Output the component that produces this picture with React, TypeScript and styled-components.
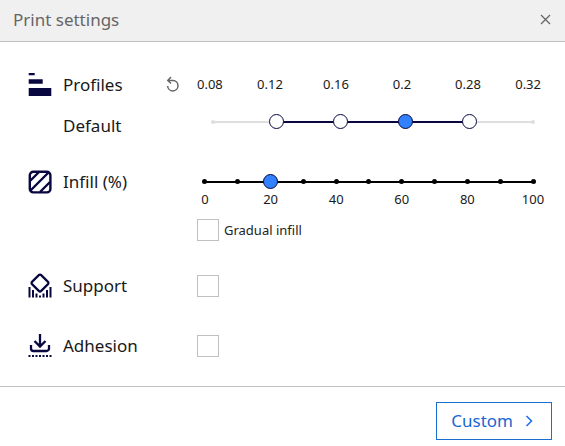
import React, { useState } from 'react';
import styled, { createGlobalStyle } from 'styled-components';

const navy = '#08073f';
const blue = '#196ef0';
const thumbBlue = '#3282ff';

const GlobalStyle = createGlobalStyle`
  * { box-sizing: border-box; }
  body {
    margin: 0;
    background: #fff;
    color: #191919;
    font: 17px/24px "Noto Sans", sans-serif;
  }
  button, input { font: inherit; margin: 0; }
`;

const Header = styled.header`
  display: flex;
  align-items: center;
  justify-content: space-between;
  height: 42px;
  padding: 0 13px 2px;
  background: #f0f0f0;
  border-bottom: 1px solid #c0c0c0;
`;

const Title = styled.h1`
  margin: 0;
  color: #666;
  font-size: 17px;
  font-weight: 400;
`;

const IconButton = styled.button`
  display: flex;
  align-items: center;
  justify-content: center;
  padding: 0;
  border: 0;
  background: none;
  color: #666;
  cursor: pointer;
`;

const Body = styled.main`
  display: grid;
  row-gap: 26px;
  padding: 26px 24px 23px 28px;
`;

const Section = styled.section`
  display: grid;
  grid-template-columns: 169px 1fr;
`;

const LabelRow = styled.div`
  display: grid;
  grid-template-columns: 24px 1fr auto;
  column-gap: 11px;
  align-items: center;
  height: 34px;
  padding-right: 17px;
`;

const ProfileName = styled.div`
  padding-left: 35px;
  line-height: 48px;
`;

const ProfileScale = styled.div`
  display: grid;
  grid-template-columns: 20fr repeat(4, 33fr) 20fr;
  align-items: center;
  height: 34px;
  padding-bottom: 2px;
  font-size: 13px;
  line-height: 18px;
  text-align: center;

  & > :first-child { text-align: left; }
  & > :last-child { text-align: right; }
`;

const ProfileTrack = styled.div`
  display: flex;
  align-items: center;
  justify-content: space-between;
  height: 39px;
  margin-left: 8px;
  background: linear-gradient(90deg, #dedede 20%, ${navy} 20% 80%, #dedede 80%)
    center / calc(100% - 15px) 2px no-repeat;
`;

const EndStop = styled.span`
  display: flex;
  justify-content: center;
  width: 15px;

  &::before {
    content: "";
    width: 4px;
    height: 4px;
    border-radius: 50%;
    background: #dedede;
  }
`;

const ProfileRadio = styled.input`
  appearance: none;
  width: 15px;
  height: 15px;
  border: 1px solid ${navy};
  border-radius: 50%;
  background: #fff;

  &:checked { background: ${thumbBlue}; }
`;

const InfillSection = styled(Section)`
  margin: -11px 0 2px;
`;

const InfillControls = styled.div`
  padding-top: 9px;
`;

const RangeBox = styled.div`
  display: grid;
  align-items: center;
  height: 15px;

  & > * { grid-area: 1 / 1; }
`;

const Ticks = styled.div`
  display: flex;
  align-items: center;
  justify-content: space-between;
  margin: 0 5px;
  height: 15px;
  background: linear-gradient(#000, #000) center / calc(100% - 4px) 2px no-repeat;
`;

const Tick = styled.span`
  width: 5px;
  height: 5px;
  border-radius: 50%;
  background: #000;
`;

const Range = styled.input`
  appearance: none;
  width: 100%;
  height: 15px;
  background: transparent;

  &::-webkit-slider-thumb {
    appearance: none;
    width: 15px;
    height: 15px;
    border: 1px solid ${navy};
    border-radius: 50%;
    background: ${thumbBlue};
  }
`;

const InfillScale = styled.div`
  display: flex;
  justify-content: space-between;
  height: 18px;
  margin: 0 8px 12px;
  font-size: 13px;
  line-height: 20px;
`;

const ScaleValue = styled.span`
  display: flex;
  justify-content: center;
  width: 0;
`;

const CheckLabel = styled.label`
  display: flex;
  align-items: center;
  gap: 5px;
  font-size: 13px;
  line-height: 22px;
  color: #222;
`;

const Checkbox = styled.input`
  appearance: none;
  align-self: center;
  width: 22px;
  height: 22px;
  border: 1px solid #c0c0c0;
  background: #fff;

  &:checked { background: ${thumbBlue}; box-shadow: inset 0 0 0 4px #fff; }
`;

const Footer = styled.footer`
  display: flex;
  justify-content: flex-end;
  padding: 15px 13px 6px;
  border-top: 1px solid #c0c0c0;
`;

const CustomButton = styled.button`
  display: flex;
  align-items: center;
  gap: 12px;
  height: 38px;
  padding: 0 18px 0 14px;
  border: 1px solid #196ecf;
  background: #fff;
  color: #1967d2;
  cursor: pointer;
`;

const ProfilesIcon = () => (
  <svg width="24" height="24" viewBox="0 0 24 24" fill={navy} aria-hidden="true">
    <path d="M.7 0h6v2.200H.7zM.7 6.200h14v4.600H.7zM.7 15h22.600v8H.7z" />
  </svg>
);

const InfillIcon = () => (
  <svg width="24" height="24" viewBox="0 0 24 24" fill="none" stroke={navy} strokeWidth="2.400" aria-hidden="true">
    <rect x="1.800" y="1.800" width="20.600" height="20.600" rx="3.500" />
    <path d="M2 11L11 2M2.500 20.500L20.500 2.500M12 22L22 12" />
  </svg>
);

const SupportIcon = () => (
  <svg width="24" height="26" viewBox="0 0 24 26" fill="none" stroke={navy} strokeWidth="2.200" aria-hidden="true">
    <path d="M12 1.600a1.700 1.700 0 0 1 1.200.5l6.800 6.800a1.500 1.500 0 0 1 0 2.200l-6.800 6.800a1.700 1.700 0 0 1-2.400 0L4 11.100a1.500 1.500 0 0 1 0-2.200l6.800-6.800a1.700 1.700 0 0 1 1.200-.5z" />
    <path strokeWidth="2" d="M1.500 14v10.500M5 17v7.500M8.500 20.500v4M12 22.500v2M15.500 20.500v4M19 17v7.500M22.500 14v10.500" />
  </svg>
);

const AdhesionIcon = () => (
  <svg width="24" height="26" viewBox="0 0 24 26" fill="none" stroke={navy} strokeWidth="2.300" aria-hidden="true">
    <path d="M12 1v12M6.500 8L12 13.500L17.500 8M3 12v3.500a2.500 2.500 0 0 0 2.500 2.500h13a2.500 2.500 0 0 0 2.500-2.500V12" />
    <path strokeWidth="2" d="M.5 23h23" strokeDasharray="2 1.500" />
  </svg>
);

const ResetIcon = () => (
  <svg width="14" height="18" viewBox="0 0 14 18" fill="none" stroke="currentColor" strokeWidth="1.500" aria-hidden="true">
    <path d="M2 4.500h5a5.200 5.200 0 1 1-5.400 5.500M5 1L1.800 4.500L5 7.500" />
  </svg>
);

const CloseIcon = () => (
  <svg width="13" height="13" viewBox="0 0 13 13" stroke="currentColor" strokeWidth="1.300" aria-hidden="true">
    <path d="M2 2l9 9M11 2l-9 9" />
  </svg>
);

const ChevronIcon = () => (
  <svg width="8" height="12" viewBox="0 0 8 12" fill="none" stroke={blue} strokeWidth="1.500" aria-hidden="true">
    <path d="M1.500 1L6.500 6L1.500 11" />
  </svg>
);

const heights = ['0.08', '0.12', '0.16', '0.2', '0.28', '0.32'];
const available = heights.slice(1, -1);
const tickValues = [0, 10, 20, 30, 40, 50, 60, 70, 80, 90, 100];

export default function App() {
  const [profile, setProfile] = useState('0.2');
  const [infill, setInfill] = useState(20);

  const reset = () => setProfile('0.2');

  return (
    <>
      <GlobalStyle />
      <Header>
        <Title>Print settings</Title>
        <IconButton type="button" aria-label="Close"><CloseIcon /></IconButton>
      </Header>
      <Body>
        <Section>
          <div>
            <LabelRow>
              <ProfilesIcon />
              <span id="profiles-label">Profiles</span>
              <IconButton type="button" aria-label="Reset profile" onClick={reset}><ResetIcon /></IconButton>
            </LabelRow>
            <ProfileName>Default</ProfileName>
          </div>
          <div>
            <ProfileScale>
              {heights.map((h) => available.includes(h)
                ? <label key={h} htmlFor={`profile-${h}`}>{h}</label>
                : <span key={h}>{h}</span>)}
            </ProfileScale>
            <ProfileTrack role="radiogroup" aria-labelledby="profiles-label">
              <EndStop />
              {available.map((h) => (
                <ProfileRadio
                  key={h}
                  id={`profile-${h}`}
                  type="radio"
                  name="profile"
                  checked={profile === h}
                  onChange={() => setProfile(h)}
                />
              ))}
              <EndStop />
            </ProfileTrack>
          </div>
        </Section>

        <InfillSection>
          <LabelRow>
            <InfillIcon />
            <label htmlFor="infill">Infill (%)</label>
          </LabelRow>
          <InfillControls>
            <RangeBox>
              <Ticks>{tickValues.map((v) => <Tick key={v} />)}</Ticks>
              <Range
                id="infill"
                type="range"
                min={0}
                max={100}
                step={10}
                value={infill}
                onChange={(e) => setInfill(Number(e.target.value))}
              />
            </RangeBox>
            <InfillScale>
              {tickValues.filter((v) => v % 20 === 0).map((v) => <ScaleValue key={v}>{v}</ScaleValue>)}
            </InfillScale>
            <CheckLabel><Checkbox type="checkbox" />Gradual infill</CheckLabel>
          </InfillControls>
        </InfillSection>

        <Section>
          <LabelRow>
            <SupportIcon />
            <label htmlFor="support">Support</label>
          </LabelRow>
          <Checkbox id="support" type="checkbox" />
        </Section>

        <Section>
          <LabelRow>
            <AdhesionIcon />
            <label htmlFor="adhesion">Adhesion</label>
          </LabelRow>
          <Checkbox id="adhesion" type="checkbox" />
        </Section>
      </Body>
      <Footer>
        <CustomButton type="button">Custom<ChevronIcon /></CustomButton>
      </Footer>
    </>
  );
}
